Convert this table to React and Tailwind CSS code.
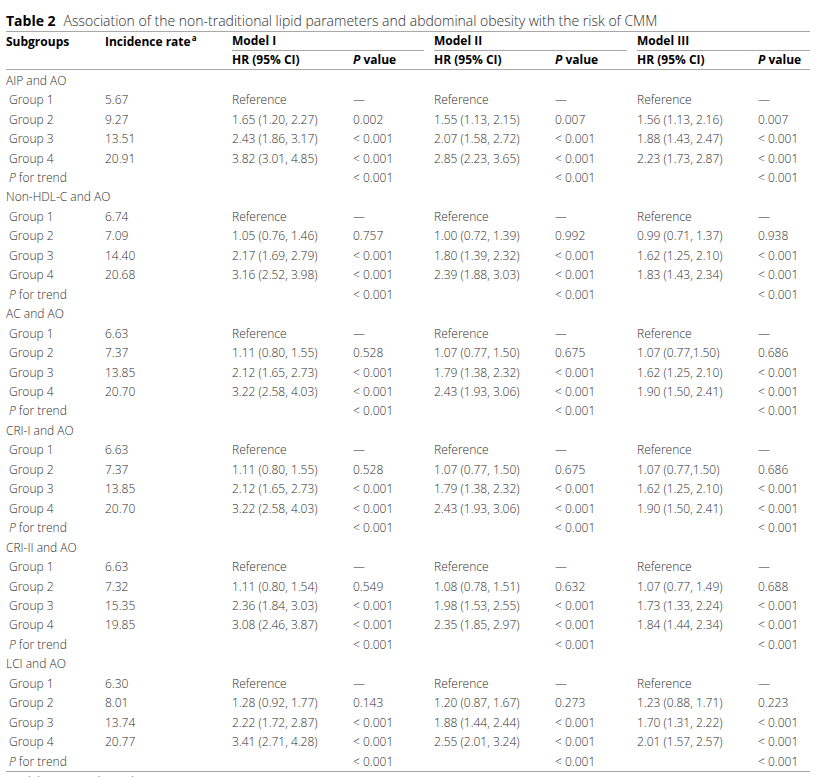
import React from "react";

const blocks = [
  {
    name: "AIP and AO",
    rows: [
      ["5.67", "Reference", "—", "Reference", "—", "Reference", "—"],
      ["9.27", "1.65 (1.20, 2.27)", "0.002", "1.55 (1.13, 2.15)", "0.007", "1.56 (1.13, 2.16)", "0.007"],
      ["13.51", "2.43 (1.86, 3.17)", "< 0.001", "2.07 (1.58, 2.72)", "< 0.001", "1.88 (1.43, 2.47)", "< 0.001"],
      ["20.91", "3.82 (3.01, 4.85)", "< 0.001", "2.85 (2.23, 3.65)", "< 0.001", "2.23 (1.73, 2.87)", "< 0.001"],
    ],
  },
  {
    name: "Non-HDL-C and AO",
    rows: [
      ["6.74", "Reference", "—", "Reference", "—", "Reference", "—"],
      ["7.09", "1.05 (0.76, 1.46)", "0.757", "1.00 (0.72, 1.39)", "0.992", "0.99 (0.71, 1.37)", "0.938"],
      ["14.40", "2.17 (1.69, 2.79)", "< 0.001", "1.80 (1.39, 2.32)", "< 0.001", "1.62 (1.25, 2.10)", "< 0.001"],
      ["20.68", "3.16 (2.52, 3.98)", "< 0.001", "2.39 (1.88, 3.03)", "< 0.001", "1.83 (1.43, 2.34)", "< 0.001"],
    ],
  },
  {
    name: "AC and AO",
    rows: [
      ["6.63", "Reference", "—", "Reference", "—", "Reference", "—"],
      ["7.37", "1.11 (0.80, 1.55)", "0.528", "1.07 (0.77, 1.50)", "0.675", "1.07 (0.77,1.50)", "0.686"],
      ["13.85", "2.12 (1.65, 2.73)", "< 0.001", "1.79 (1.38, 2.32)", "< 0.001", "1.62 (1.25, 2.10)", "< 0.001"],
      ["20.70", "3.22 (2.58, 4.03)", "< 0.001", "2.43 (1.93, 3.06)", "< 0.001", "1.90 (1.50, 2.41)", "< 0.001"],
    ],
  },
  {
    name: "CRI-I and AO",
    rows: [
      ["6.63", "Reference", "—", "Reference", "—", "Reference", "—"],
      ["7.37", "1.11 (0.80, 1.55)", "0.528", "1.07 (0.77, 1.50)", "0.675", "1.07 (0.77,1.50)", "0.686"],
      ["13.85", "2.12 (1.65, 2.73)", "< 0.001", "1.79 (1.38, 2.32)", "< 0.001", "1.62 (1.25, 2.10)", "< 0.001"],
      ["20.70", "3.22 (2.58, 4.03)", "< 0.001", "2.43 (1.93, 3.06)", "< 0.001", "1.90 (1.50, 2.41)", "< 0.001"],
    ],
  },
  {
    name: "CRI-II and AO",
    rows: [
      ["6.63", "Reference", "—", "Reference", "—", "Reference", "—"],
      ["7.32", "1.11 (0.80, 1.54)", "0.549", "1.08 (0.78, 1.51)", "0.632", "1.07 (0.77, 1.49)", "0.688"],
      ["15.35", "2.36 (1.84, 3.03)", "< 0.001", "1.98 (1.53, 2.55)", "< 0.001", "1.73 (1.33, 2.24)", "< 0.001"],
      ["19.85", "3.08 (2.46, 3.87)", "< 0.001", "2.35 (1.85, 2.97)", "< 0.001", "1.84 (1.44, 2.34)", "< 0.001"],
    ],
  },
  {
    name: "LCI and AO",
    rows: [
      ["6.30", "Reference", "—", "Reference", "—", "Reference", "—"],
      ["8.01", "1.28 (0.92, 1.77)", "0.143", "1.20 (0.87, 1.67)", "0.273", "1.23 (0.88, 1.71)", "0.223"],
      ["13.74", "2.22 (1.72, 2.87)", "< 0.001", "1.88 (1.44, 2.44)", "< 0.001", "1.70 (1.31, 2.22)", "< 0.001"],
      ["20.77", "3.41 (2.71, 4.28)", "< 0.001", "2.55 (2.01, 3.24)", "< 0.001", "2.01 (1.57, 2.57)", "< 0.001"],
    ],
  },
];

const grid = "grid grid-cols-[99px_127px_121px_81px_121px_82px_121px_52px]";

function Row({ cells, italicFirst }) {
  return (
    <div className={`${grid} h-[19.46px] items-center`}>
      <div className="pl-[3px]">
        {italicFirst ? (
          <span>
            <span className="italic">P</span> for trend
          </span>
        ) : (
          cells[0]
        )}
      </div>
      {cells.slice(1).map((c, i) => (
        <div key={i} className="whitespace-nowrap">
          {c}
        </div>
      ))}
    </div>
  );
}

export default function App() {
  return (
    <div
      className="bg-white w-[837px] h-[777px] overflow-hidden text-[#2e2e2e]"
      style={{ fontFamily: '"Open Sans", "Liberation Sans", sans-serif' }}
    >
      <div className="pl-[6px] pt-[9px] w-[810px]">
        <div className="h-[22px] flex items-center text-[14px] whitespace-nowrap">
          <span className="font-bold text-black mr-[8px]">Table 2</span>
          <span className="font-light">Association of the non-traditional lipid parameters and abdominal obesity with the risk of CMM</span>
        </div>
        <div className="border-t border-[#a8a8a8] text-[12px] font-light">
          {/* header row 1 */}
          <div className={`${grid} h-[19px] items-center font-bold text-black`}>
            <div>Subgroups</div>
            <div>
              Incidence rate<span className="text-[8px] relative -top-[5px] ml-[1px]">a</span>
            </div>
            <div className="col-span-2 h-full flex items-center border-b border-[#a8a8a8] mr-[10px]">Model I</div>
            <div className="col-span-2 h-full flex items-center border-b border-[#a8a8a8] mr-[10px]">Model II</div>
            <div className="col-span-2 h-full flex items-center border-b border-[#a8a8a8]">Model III</div>
          </div>
          {/* header row 2 */}
          <div className={`${grid} h-[19px] items-center font-bold text-black border-b border-[#a8a8a8]`}>
            <div></div>
            <div></div>
            <div>HR (95% CI)</div>
            <div>
              <span className="italic">P</span> value
            </div>
            <div>HR (95% CI)</div>
            <div>
              <span className="italic">P</span> value
            </div>
            <div>HR (95% CI)</div>
            <div>
              <span className="italic">P</span> value
            </div>
          </div>
          {/* body */}
          <div className="pt-[1px]">
            {blocks.map((b) => (
              <div key={b.name}>
                <div className="h-[19.46px] flex items-center">{b.name}</div>
                {b.rows.map((r, i) => (
                  <Row key={i} cells={[`Group ${i + 1}`, ...r]} />
                ))}
                <Row italicFirst cells={["", "", "", "< 0.001", "", "< 0.001", "", "< 0.001"]} />
              </div>
            ))}
          </div>
          <div className="border-t border-[#a8a8a8] pt-[1px] h-[20px]">Model I was unadjusted</div>
        </div>
      </div>
    </div>
  );
}
